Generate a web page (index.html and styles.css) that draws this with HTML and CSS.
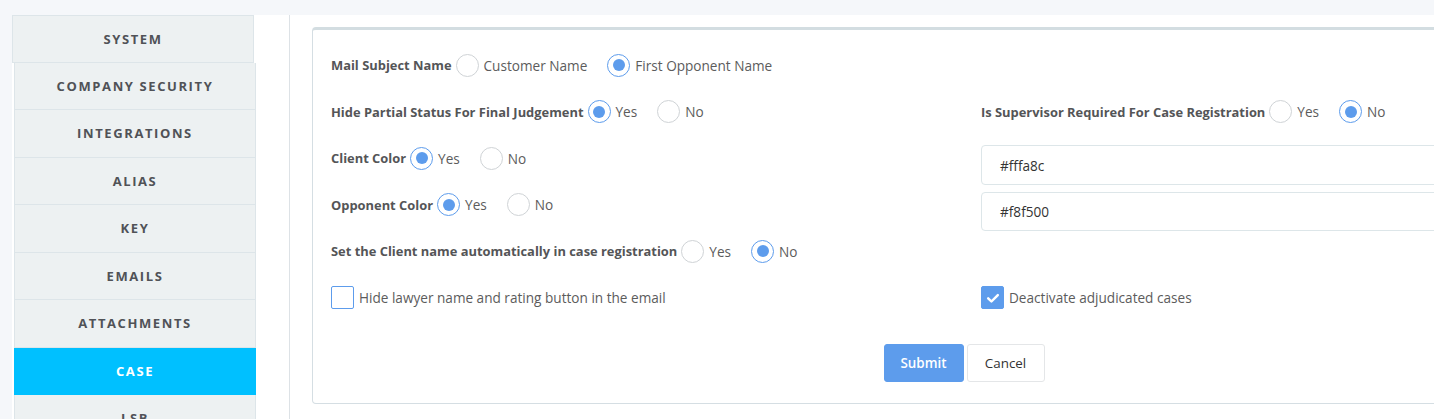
FILE: index.html
```html
<!DOCTYPE html>
<html>
<head>
<meta charset="utf-8">
<link rel="stylesheet" href="styles.css">
</head>
<body>
<div class="page">
  <aside class="side">
    <nav class="menu">
      <div class="item first">SYSTEM</div>
      <div class="item">COMPANY SECURITY</div>
      <div class="item">INTEGRATIONS</div>
      <div class="item">ALIAS</div>
      <div class="item">KEY</div>
      <div class="item">EMAILS</div>
      <div class="item">ATTACHMENTS</div>
      <div class="item active">CASE</div>
      <div class="item">LSB</div>
    </nav>
  </aside>
  <main class="main">
    <section class="card">
      <div class="cols">
        <div class="col">
          <div class="row">
            <span class="lbl">Mail Subject Name</span>
            <span class="radio"></span><span class="opt">Customer Name</span>
            <span class="radio on"></span><span class="opt">First Opponent Name</span>
          </div>
          <div class="row">
            <span class="lbl">Hide Partial Status For Final Judgement</span>
            <span class="radio on"></span><span class="opt">Yes</span>
            <span class="radio"></span><span class="opt">No</span>
          </div>
          <div class="row">
            <span class="lbl">Client Color</span>
            <span class="radio on"></span><span class="opt">Yes</span>
            <span class="radio"></span><span class="opt">No</span>
          </div>
          <div class="row">
            <span class="lbl">Opponent Color</span>
            <span class="radio on"></span><span class="opt">Yes</span>
            <span class="radio"></span><span class="opt">No</span>
          </div>
          <div class="row">
            <span class="lbl">Set the Client name automatically in case registration</span>
            <span class="radio"></span><span class="opt">Yes</span>
            <span class="radio on"></span><span class="opt">No</span>
          </div>
          <div class="row">
            <span class="check"></span><span class="copt">Hide lawyer name and rating button in the email</span>
          </div>
        </div>
        <div class="col">
          <div class="row"></div>
          <div class="row">
            <span class="lbl">Is Supervisor Required For Case Registration</span>
            <span class="radio"></span><span class="opt">Yes</span>
            <span class="radio on"></span><span class="opt">No</span>
          </div>
          <div class="field first-field">#fffa8c</div>
          <div class="field">#f8f500</div>
          <div class="row after-fields">
            <span class="check on"><svg viewBox="0 0 16 16" width="14" height="14"><path d="M2.5 8.3 L6.2 12 L13.5 4.6" fill="none" stroke="#fff" stroke-width="2.8" stroke-linecap="round" stroke-linejoin="round"/></svg></span><span class="copt">Deactivate adjudicated cases</span>
          </div>
        </div>
      </div>
      <div class="actions">
        <button class="btn primary">Submit</button>
        <button class="btn">Cancel</button>
      </div>
    </section>
  </main>
</div>
</body>
</html>
```
FILE: styles.css
```css
* { box-sizing: border-box; }
html, body { margin: 0; padding: 0; }
body {
  background: #f5f7fa;
  font-family: "Open Sans", "Liberation Sans", sans-serif;
  font-size: 13px;
  color: #555;
  overflow: hidden;
  height: 419px;
}
.page {
  display: flex;
  margin: 15px 0 0 12px;
  background: #fff;
  height: 404px;
}
.side {
  width: 278px;
  flex: none;
  border-right: 1px solid #dde2e6;
}
.menu { width: 244px; }
.item {
  height: 47.5px;
  display: flex;
  align-items: center;
  justify-content: center;
  background: #edf1f2;
  border-bottom: 1px solid #dde5e9;
  border-left: 1px solid #dde5e9;
  border-right: 1px solid #dde5e9;
  margin-left: 2px;
  font-weight: 700;
  letter-spacing: 1.6px;
  color: #505257;
  font-size: 13px;
}
.item.first {
  margin-left: 0;
  margin-right: 2px;
  border-top: 1px solid #dde5e9;
}
.item.active {
  background: #00c0ff;
  color: #fff;
  border-color: #00c0ff;
}
.main {
  flex: 1;
  padding: 12px 0 0 22px;
  overflow: hidden;
}
.card {
  width: 1304px;
  height: 377px;
  border: 1px solid #d5dee3;
  border-top: 3px solid #d3dde1;
  border-radius: 4px;
  padding: 12px 18px 0 18px;
}
.cols {
  display: grid;
  grid-template-columns: 616px 616px;
  column-gap: 34px;
}
.row {
  height: 46.5px;
  display: flex;
  align-items: center;
}
.lbl {
  font-weight: 700;
  font-size: 12.9px;
  color: #545557;
  margin-right: 4px;
}
.radio {
  width: 23px;
  height: 23px;
  border: 1px solid #cfd3d6;
  border-radius: 50%;
  flex: none;
  position: relative;
  background: #fff;
}
.radio.on { border-color: #5d9cec; }
.radio.on::after {
  content: "";
  position: absolute;
  left: 4.5px;
  top: 4.5px;
  width: 12px;
  height: 12px;
  border-radius: 50%;
  background: #5d9cec;
}
.opt {
  font-size: 13.6px;
  margin-left: 5px;
  margin-right: 20px;
  color: #5c5c5c;
}
.check {
  width: 23px;
  height: 23px;
  border: 1px solid #5d9cec;
  border-radius: 2px;
  flex: none;
  display: flex;
  align-items: center;
  justify-content: center;
}
.check.on { background: #5d9cec; }
.copt {
  font-size: 13.6px;
  margin-left: 5px;
  color: #5c5c5c;
}
.field {
  height: 40px;
  border: 1px solid #dde6e9;
  border-radius: 4px;
  padding-left: 18px;
  display: flex;
  align-items: center;
  color: #333;
  font-size: 13.6px;
}
.first-field { margin-top: 10px; }
.field + .field { margin-top: 7px; height: 39px; }
.after-fields { margin-top: 43.5px; }
.actions {
  display: flex;
  justify-content: center;
  gap: 3px;
  margin-top: 23px;
}
.btn {
  height: 38px;
  font-family: inherit;
  font-size: 13.4px;
  border-radius: 3px;
  border: 1px solid #e4e6e8;
  background: #fff;
  color: #333;
  width: 78px;
  padding: 0;
}
.btn.primary {
  width: 80px;
  background: #5d9cec;
  border-color: #5d9cec;
  color: #fff;
  font-weight: 600;
}
```
